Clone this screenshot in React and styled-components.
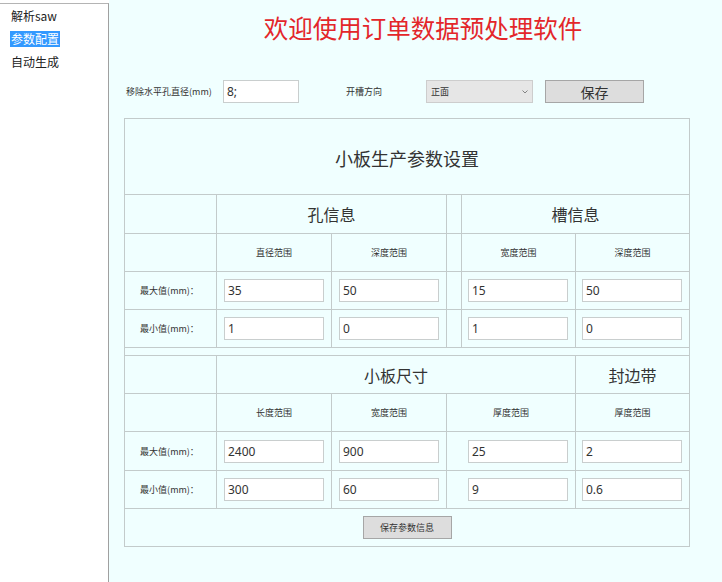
import React from "react";
import styled, { createGlobalStyle } from "styled-components";

const Global = createGlobalStyle`
  html, body { margin: 0; padding: 0; background: #ffffff; overflow: hidden; }
  body { font-family: "Noto Sans CJK SC", "Noto Sans", sans-serif; color: #333; }
  * { box-sizing: border-box; }
`;

const Shell = styled.div`
  display: flex;
  width: 722px;
  height: 582px;
`;

const Sidebar = styled.div`
  width: 109px;
  margin-top: 3px;
  border-top: 1px solid #b4b4b4;
  border-right: 1px solid #a0a0a0;
  background: #ffffff;
  display: flex;
  flex-direction: column;
  padding: 0 0 0 10px;
`;

const NavItem = styled.div`
  height: 23px;
  display: flex;
  align-items: center;
`;

const NavText = styled.span`
  font-size: 12px;
  line-height: 16px;
  padding: 0 1px;
  color: ${(p) => (p.$active ? "#ffffff" : "#222")};
  background: ${(p) => (p.$active ? "#3399ff" : "transparent")};
`;

const Main = styled.div`
  flex: 1;
  background: #f0ffff;
  padding: 12px 0 0 15px;
  display: flex;
  flex-direction: column;
`;

const Title = styled.h1`
  margin: 0;
  width: 598px;
  text-align: center;
  font-size: 24.5px;
  line-height: 32px;
  font-weight: 400;
  color: #e3262a;
`;

const Toolbar = styled.div`
  display: flex;
  align-items: center;
  height: 23px;
  margin-top: 36px;
  padding-left: 2px;
`;

const ToolLabel = styled.span`
  width: ${(p) => p.$w}px;
  margin-left: ${(p) => p.$ml || 0}px;
  font-size: 9px;
  line-height: 12px;
  color: #333;
  white-space: nowrap;
`;

const TextBox = styled.div`
  width: ${(p) => p.$w || 100}px;
  height: 23px;
  background: #ffffff;
  border: 1px solid #c9cece;
  font-size: 12px;
  line-height: 21px;
  padding-left: 3px;
  color: #333;
  font-family: "Noto Sans", "Noto Sans CJK SC", sans-serif;
`;

const Select = styled.div`
  width: 107px;
  height: 23px;
  background: #e6e6e6;
  border: 1px solid #cdcdcd;
  display: flex;
  align-items: center;
  justify-content: space-between;
  padding: 0 4px 0 4px;
  font-size: 9px;
  color: #333;
`;

const Chevron = styled.svg`
  width: 6px;
  height: 4px;
`;

const Button = styled.div`
  width: ${(p) => p.$w}px;
  height: 23px;
  margin-left: ${(p) => p.$ml || 0}px;
  background: #dddddd;
  border: 1px solid #a6a6a6;
  display: flex;
  align-items: center;
  justify-content: center;
  font-size: ${(p) => p.$fs}px;
  color: #333;
`;

const Panel = styled.div`
  margin-top: 15px;
  display: grid;
  grid-template-columns: 91px 114px 114px 14px 113px 113px;
  grid-template-rows: 75px 38px 37px 37px 37px 7px 37px 37px 38px 37px 37px;
  gap: 1px;
  padding: 1px;
  background: #c3cbcb;
  width: 566px;
`;

const Cell = styled.div`
  background: #f0ffff;
  grid-column: ${(p) => p.$col || "auto"};
  display: flex;
  align-items: center;
  justify-content: ${(p) => (p.$end ? "flex-end" : "center")};
  padding-right: ${(p) => (p.$end ? 7 : 0)}px;
  font-size: ${(p) => p.$fs || 9}px;
  color: #333;
  white-space: nowrap;
`;

const PanelTitle = styled(Cell)`
  font-size: 18px;
  padding-top: 2px;
`;

const GroupHead = styled(Cell)`
  font-size: 16px;
`;

const RowLabel = styled(Cell)`
  padding-right: 2px;
`;

const Empty = () => <Cell />;

const ValueCell = ({ v, col }) => (
  <Cell $end $col={col}>
    <TextBox>{v}</TextBox>
  </Cell>
);

export default function App() {
  return (
    <>
      <Global />
      <Shell>
        <Sidebar>
          <NavItem><NavText>解析saw</NavText></NavItem>
          <NavItem><NavText $active>参数配置</NavText></NavItem>
          <NavItem><NavText>自动生成</NavText></NavItem>
        </Sidebar>
        <Main>
          <Title>欢迎使用订单数据预处理软件</Title>
          <Toolbar>
            <ToolLabel $w={97}>移除水平孔直径(mm)</ToolLabel>
            <TextBox $w={76}>8;</TextBox>
            <ToolLabel $w={80} $ml={47}>开槽方向</ToolLabel>
            <Select>
              <span>正面</span>
              <Chevron viewBox="0 0 6 4">
                <path d="M0.5 0.5 L3 3 L5.5 0.5" fill="none" stroke="#777" strokeWidth="0.9" />
              </Chevron>
            </Select>
            <Button $w={99} $ml={12} $fs={14}>保存</Button>
          </Toolbar>
          <Panel>
            <PanelTitle $col="1 / -1">小板生产参数设置</PanelTitle>

            <Empty />
            <GroupHead $col="2 / 4">孔信息</GroupHead>
            <Empty />
            <GroupHead $col="5 / 7">槽信息</GroupHead>

            <Empty />
            <Cell>直径范围</Cell>
            <Cell>深度范围</Cell>
            <Empty />
            <Cell>宽度范围</Cell>
            <Cell>深度范围</Cell>

            <RowLabel>最大值(mm)：</RowLabel>
            <ValueCell v="35" />
            <ValueCell v="50" />
            <Empty />
            <ValueCell v="15" />
            <ValueCell v="50" />

            <RowLabel>最小值(mm)：</RowLabel>
            <ValueCell v="1" />
            <ValueCell v="0" />
            <Empty />
            <ValueCell v="1" />
            <ValueCell v="0" />

            <Cell $col="1 / -1" />

            <Empty />
            <GroupHead $col="2 / 6">小板尺寸</GroupHead>
            <GroupHead>封边带</GroupHead>

            <Empty />
            <Cell>长度范围</Cell>
            <Cell>宽度范围</Cell>
            <Cell $col="4 / 6">厚度范围</Cell>
            <Cell>厚度范围</Cell>

            <RowLabel>最大值(mm)：</RowLabel>
            <ValueCell v="2400" />
            <ValueCell v="900" />
            <ValueCell v="25" col="4 / 6" />
            <ValueCell v="2" />

            <RowLabel>最小值(mm)：</RowLabel>
            <ValueCell v="300" />
            <ValueCell v="60" />
            <ValueCell v="9" col="4 / 6" />
            <ValueCell v="0.6" />

            <Cell $col="1 / -1">
              <Button $w={89} $fs={9}>保存参数信息</Button>
            </Cell>
          </Panel>
        </Main>
      </Shell>
    </>
  );
}
